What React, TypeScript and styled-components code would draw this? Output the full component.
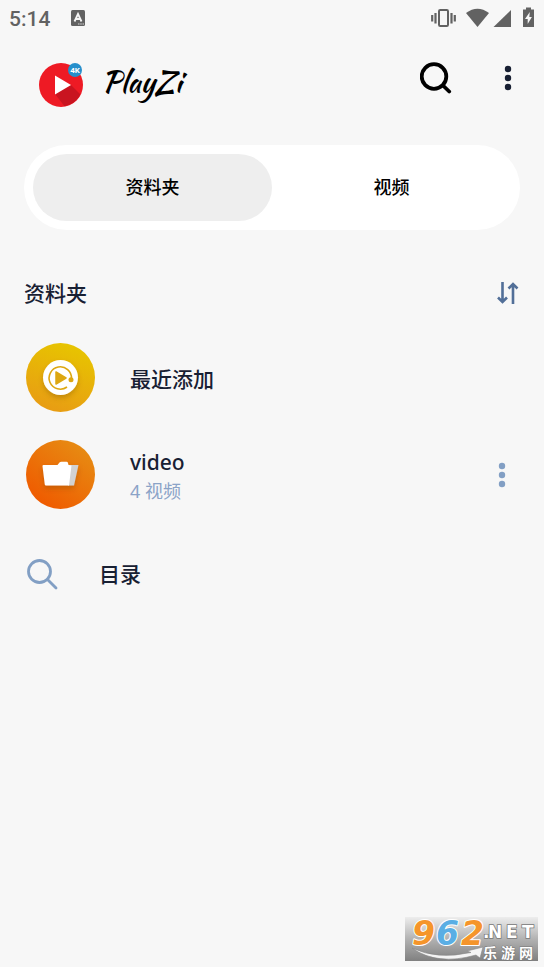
import React, { useState } from "react";
import styled, { createGlobalStyle } from "styled-components";

const GlobalStyle = createGlobalStyle`
  * { box-sizing: border-box; }
  body {
    margin: 0;
    background: #f7f7f7;
    color: #182033;
    font-family: "Noto Sans", "Noto Sans CJK SC", sans-serif;
  }
  button { font: inherit; color: inherit; border: 0; padding: 0; background: none; cursor: pointer; }
  svg { display: block; flex: none; }
`;

const Screen = styled.div`
  position: relative;
  display: flex;
  flex-direction: column;
  min-height: 100vh;
`;

const StatusBar = styled.div`
  display: flex;
  align-items: center;
  justify-content: space-between;
  height: 36px;
  padding: 0 8px 0 9px;
  color: #626262;
`;

const StatusGroup = styled.div<{ $gap: number }>`
  display: flex;
  align-items: center;
  gap: ${(p) => p.$gap}px;
`;

const Clock = styled.time`
  padding-top: 2px;
  font: 500 21px/24px Roboto, sans-serif;
`;

const Header = styled.header`
  display: flex;
  align-items: center;
  justify-content: space-between;
  height: 96px;
  padding: 0 28px 0 38px;
`;

const Brand = styled.div`
  display: flex;
  align-items: center;
  gap: 18px;
`;

const BrandName = styled.h1`
  margin: 0;
  padding-bottom: 4px;
  color: #000;
  font: 400 29px/40px "Kaushan Script", "Liberation Serif", cursive;
`;

const HeaderActions = styled.div`
  display: flex;
  align-items: center;
  gap: 48px;
  padding-bottom: 12px;
`;

const IconButton = styled.button<{ $color: string }>`
  display: flex;
  align-items: center;
  justify-content: center;
  min-width: 16px;
  min-height: 32px;
  color: ${(p) => p.$color};
`;

const Tabs = styled.div`
  display: grid;
  grid-template-columns: 1fr 1fr;
  margin: 13px 24px 0;
  padding: 9px;
  border-radius: 43px;
  background: #fff;
`;

const Tab = styled.button<{ $active: boolean }>`
  && {
    height: 67px;
    padding-bottom: 3px;
    border-radius: 34px;
    background: ${(p) => (p.$active ? "#eee" : "transparent")};
    color: #000;
    font-size: 18px;
    font-weight: 500;
  }
`;

const SectionHead = styled.div`
  display: flex;
  align-items: center;
  justify-content: space-between;
  padding: 0 24px;
  margin-top: 46px;
`;

const SectionTitle = styled.h2`
  margin: 0;
  font-size: 21px;
  font-weight: 500;
  line-height: 34px;
`;

const List = styled.ul`
  display: flex;
  flex-direction: column;
  gap: 28px;
  margin: 33px 0 0;
  padding: 0 34px 0 26px;
  list-style: none;
`;

const Row = styled.li`
  display: flex;
  align-items: center;
  justify-content: space-between;
`;

const RowButton = styled.button<{ $gap: number }>`
  display: flex;
  flex: 1;
  align-items: center;
  gap: ${(p) => p.$gap}px;
  text-align: left;
`;

const RowText = styled.span`
  display: flex;
  flex-direction: column;
  padding-top: 2px;
`;

const RowTitle = styled.span`
  font-size: 21px;
  font-weight: 500;
  line-height: 30px;
`;

const RowMeta = styled.span`
  color: #8ba3c7;
  font-size: 18px;
  line-height: 28px;
`;

const DirectoryRow = styled.div`
  display: flex;
  padding: 0 26px;
  margin-top: 49px;
`;

const MutedIcon = styled.span`
  color: #829fc4;
`;

const Watermark = styled.div`
  position: absolute;
  right: 6px;
  bottom: 6px;
`;

const LogoSvg = styled.svg`
  overflow: visible;
`;

const KeyboardIcon = () => (
  <svg width="14" height="16" viewBox="0 0 14 16" aria-hidden="true">
    <rect width="14" height="16" rx="1.5" fill="#626262" />
    <path d="M3.5 11.5 7 4l3.5 7.5M4.8 9h4.4" fill="none" stroke="#f7f7f7" strokeWidth="1.8" />
    <path d="M7.2 14h1.2M9.4 14h1.2M11.6 14h1.2" stroke="#f7f7f7" strokeWidth="1.2" />
  </svg>
);

const StatusIcons = () => (
  <svg width="105" height="22" viewBox="0 0 105 22" fill="#626262" aria-hidden="true">
    <rect x="8" y="3" width="9" height="16" rx="1.2" fill="none" stroke="#626262" strokeWidth="2" />
    <path d="M1.200 8v6.500M4.500 6v10.500M20.500 6v10.500M23.800 8v6.500" stroke="#626262" strokeWidth="2.200" />
    <path d="M35 6Q46.500-2.500 58 6L46.500 20Z" />
    <path d="M62.500 20 80 3V20Z" />
    <path d="M92 2.500h3V.5h5v2h3v17.500H92Z" />
    <path d="m98.800 5-4.800 7h2.700v5l4.200-7h-2.600Z" fill="#f7f7f7" />
  </svg>
);

const BrandIcon = () => (
  <svg width="46" height="46" viewBox="0 0 46 46" aria-hidden="true">
    <defs>
      <clipPath id="brandDisc"><circle cx="23" cy="24" r="21.5" /></clipPath>
    </defs>
    <circle cx="23" cy="24" r="22" fill="#ee1a24" />
    <path clipPath="url(#brandDisc)" d="m33 24 15 15-8 12H31L17 33Z" fill="#c91420" />
    <path d="M17 14.500v19L33 24Z" fill="#fff" />
    <circle cx="37" cy="9" r="7" fill="#258fcc" />
    <text x="37" y="11.800" textAnchor="middle" fontFamily="Roboto, sans-serif" fontSize="8" fontWeight="700" fill="#fff">4K</text>
  </svg>
);

const SearchIcon = ({ bold }: { bold?: boolean }) => (
  <svg width="32" height="32" viewBox="0 0 32 32" fill="none" stroke="currentColor" strokeWidth={bold ? 3.8 : 2.8} strokeLinecap="round" aria-hidden="true">
    {bold ? (
      <>
        <circle cx="14" cy="14.500" r="12.300" />
        <path d="m23 23.500 6.200 6" />
      </>
    ) : (
      <>
        <circle cx="13.500" cy="13.500" r="11" />
        <path d="m21.500 21.500 8.500 8.500" />
      </>
    )}
  </svg>
);

const DotsIcon = () => (
  <svg width="8" height="28" viewBox="0 0 8 28" fill="currentColor" aria-hidden="true">
    <circle cx="4" cy="5" r="3.200" />
    <circle cx="4" cy="14" r="3.200" />
    <circle cx="4" cy="23" r="3.200" />
  </svg>
);

const SortIcon = () => (
  <svg width="24" height="24" viewBox="0 0 24 24" fill="none" stroke="currentColor" strokeWidth="2.600" aria-hidden="true">
    <path d="M6.500 1v20M2 16.500l4.500 4.500 4.500-4.500M17 23V3M12.500 7.500l4.500-4.500 4.500 4.500" />
  </svg>
);

const RecentIcon = () => (
  <svg width="69" height="69" viewBox="0 0 69 69" aria-hidden="true">
    <defs>
      <linearGradient id="recentFill" x1=".65" y1="0" x2=".3" y2="1">
        <stop stopColor="#e7c500" /><stop offset="1" stopColor="#e89b14" />
      </linearGradient>
      <filter id="softShadow" x="-30%" y="-30%" width="160%" height="170%">
        <feDropShadow dx="0" dy="3" stdDeviation="2.500" floodColor="#704000" floodOpacity=".3" />
      </filter>
    </defs>
    <circle cx="34.500" cy="34.500" r="34.500" fill="url(#recentFill)" />
    <circle cx="34.500" cy="34.500" r="17.500" fill="#fff" filter="url(#softShadow)" />
    <path d="M41 44A11.200 11.200 0 1 1 45.500 35.500" fill="none" stroke="#dda711" strokeWidth="1.600" />
    <path d="M30 29v12l10-6Z" fill="#dda711" stroke="#dda711" strokeWidth="1.500" strokeLinejoin="round" />
    <circle cx="45" cy="36.800" r="2.500" fill="#dda711" />
  </svg>
);

const FolderIcon = () => (
  <svg width="69" height="69" viewBox="0 0 69 69" aria-hidden="true">
    <defs>
      <linearGradient id="folderFill" x1=".8" y1=".1" x2=".2" y2=".9">
        <stop stopColor="#e78a12" /><stop offset="1" stopColor="#ef5b00" />
      </linearGradient>
    </defs>
    <circle cx="34.500" cy="34.500" r="34.500" fill="url(#folderFill)" />
    <g filter="url(#softShadow)">
      <path d="M42 25h10.500L48 45.500h-6Z" fill="#d2d2d2" />
      <path d="M16.500 26q0-1 1-1H31.500l2-2.500q.6-.8 2-.8h5q1.200 0 1.400 1l.6 2.300 3 .5-2.500 20H20q-1 0-1.200-1Z" fill="#fff" />
    </g>
  </svg>
);

const SiteLogo = () => (
  <LogoSvg width="133" height="44" viewBox="0 0 133 44" role="img" aria-label="962.NET 乐游网">
    <defs>
      <linearGradient id="plate" x1="0" y1="0" x2="0" y2="1">
        <stop stopColor="#ededed" /><stop offset=".5" stopColor="#b2b2b2" /><stop offset="1" stopColor="#808080" />
      </linearGradient>
    </defs>
    <rect width="133" height="44" fill="url(#plate)" />
    <path d="M7 31Q32 43 66 35.500L62 34l16-4-3 11-4-3Q32 49 7 31Z" fill="#f4f4f4" stroke="#888" strokeWidth=".6" />
    <g fontFamily="DejaVu Sans, sans-serif" fontSize="33" fontWeight="700" fontStyle="italic" stroke="#fff" strokeWidth="2" strokeLinejoin="round" paintOrder="stroke">
      <text x="7" y="28" fill="#f5952b">9</text>
      <text x="31" y="28" fill="#5aaee4">6</text>
      <text x="56" y="28" fill="#f5952b">2</text>
    </g>
    <g fill="#fff" stroke="#777" strokeWidth="1.500" paintOrder="stroke" fontWeight="700" fontFamily="DejaVu Sans, sans-serif" fontSize="17">
      <text x="78" y="21">.</text>
      <text x="83" y="21">N</text>
      <text x="101" y="21">E</text>
      <text x="117" y="21">T</text>
    </g>
    <g fill="#fff" stroke="#777" strokeWidth="1" paintOrder="stroke" fontWeight="700" fontFamily="Noto Sans CJK SC, sans-serif" fontSize="14">
      <text x="78" y="41">乐</text>
      <text x="96" y="41">游</text>
      <text x="114" y="41">网</text>
    </g>
  </LogoSvg>
);

const tabs = ["资料夹", "视频"];

const folders = [
  { title: "最近添加", icon: <RecentIcon /> },
  { title: "video", meta: "4 视频", icon: <FolderIcon /> },
];

export default function App() {
  const [active, setActive] = useState(0);
  return (
    <>
      <GlobalStyle />
      <Screen>
        <StatusBar>
          <StatusGroup $gap={21}>
            <Clock>5:14</Clock>
            <KeyboardIcon />
          </StatusGroup>
          <StatusIcons />
        </StatusBar>
        <Header>
          <Brand>
            <BrandIcon />
            <BrandName>PlayZi</BrandName>
          </Brand>
          <HeaderActions>
            <IconButton $color="#000" aria-label="搜索"><SearchIcon bold /></IconButton>
            <IconButton $color="#182033" aria-label="更多"><DotsIcon /></IconButton>
          </HeaderActions>
        </Header>
        <main>
          <Tabs role="tablist">
            {tabs.map((label, i) => (
              <Tab key={label} role="tab" aria-selected={i === active} $active={i === active} onClick={() => setActive(i)}>
                {label}
              </Tab>
            ))}
          </Tabs>
          <SectionHead>
            <SectionTitle>资料夹</SectionTitle>
            <IconButton $color="#526f98" aria-label="排序"><SortIcon /></IconButton>
          </SectionHead>
          <List>
            {folders.map((f) => (
              <Row key={f.title}>
                <RowButton $gap={35}>
                  {f.icon}
                  <RowText>
                    <RowTitle>{f.title}</RowTitle>
                    {f.meta && <RowMeta>{f.meta}</RowMeta>}
                  </RowText>
                </RowButton>
                {f.meta && <IconButton $color="#829fc4" aria-label="更多"><DotsIcon /></IconButton>}
              </Row>
            ))}
          </List>
          <DirectoryRow>
            <RowButton $gap={41}>
              <MutedIcon><SearchIcon /></MutedIcon>
              <RowTitle>目录</RowTitle>
            </RowButton>
          </DirectoryRow>
        </main>
        <Watermark><SiteLogo /></Watermark>
      </Screen>
    </>
  );
}
